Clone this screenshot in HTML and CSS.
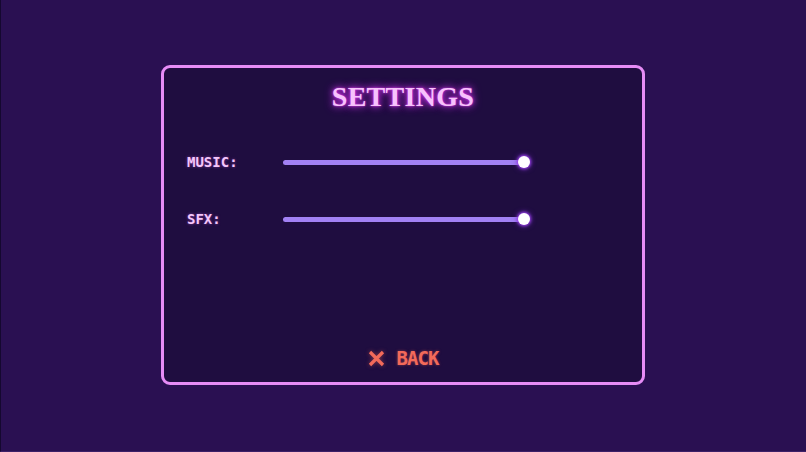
FILE: index.html
```html
<!DOCTYPE html>
<html>
<head>
<meta charset="utf-8">
<link rel="stylesheet" href="styles.css">
</head>
<body>
<div class="screen">
  <div class="panel">
    <h1 class="title">SETTINGS</h1>
    <div class="rows">
      <div class="row">
        <span class="label">MUSIC:</span>
        <div class="slider"><div class="track"></div><div class="thumb"></div></div>
      </div>
      <div class="row">
        <span class="label">SFX:</span>
        <div class="slider"><div class="track"></div><div class="thumb"></div></div>
      </div>
    </div>
    <div class="back">
      <svg class="x-icon" width="17" height="17" viewBox="0 0 17 17"><path d="M2 2 L15 15 M15 2 L2 15" stroke="#f26a5a" stroke-width="3.2" stroke-linecap="butt" fill="none"/></svg>
      <span class="back-text">BACK</span>
    </div>
  </div>
</div>
</body>
</html>
```
FILE: styles.css
```css
html, body {
  margin: 0;
  padding: 0;
  background: #2a1052;
}
.screen {
  box-sizing: border-box;
  width: 806px;
  height: 452px;
  background: #2a1052;
  border-left: 1px solid #150830;
  border-bottom: 1px solid #3c2068;
  display: flex;
  justify-content: center;
  align-items: flex-start;
  padding-top: 65px;
}
.panel {
  box-sizing: border-box;
  width: 484px;
  height: 320px;
  margin-left: -1px;
  background: #1f0d40;
  border: 3px solid #e68cf6;
  border-radius: 9px;
  display: flex;
  flex-direction: column;
  padding: 12px 23px 0 23px;
}
.title {
  margin: 0;
  text-align: center;
  font-family: "Liberation Serif", "DejaVu Serif", serif;
  font-weight: bold;
  font-size: 28px;
  line-height: 34px;
  color: #f7c2fc;
  text-shadow: 0 0 2px #e040f0, 0 0 6px #c030e0, 0 0 10px #a020c0;
  letter-spacing: 0.3px;
}
.rows {
  display: flex;
  flex-direction: column;
  gap: 35px;
  margin-top: 37px;
}
.row {
  display: flex;
  align-items: center;
  height: 22px;
}
.label {
  width: 96px;
  font-family: "DejaVu Sans Mono", "Liberation Mono", monospace;
  font-size: 14px;
  font-weight: bold;
  color: #f4c6fa;
  text-shadow: 0 0 3px rgba(220, 100, 240, 0.5);
}
.slider {
  position: relative;
  width: 248px;
  height: 14px;
  display: flex;
  align-items: center;
}
.track {
  width: 242px;
  height: 5px;
  border-radius: 2.5px;
  background: #a281f4;
}
.thumb {
  position: absolute;
  left: 235px;
  top: 1px;
  width: 12px;
  height: 12px;
  border-radius: 50%;
  background: #ffffff;
  box-shadow: 0 0 3px 1px #9a40e8, 0 0 6px #7a30d0;
}
.back {
  margin-top: auto;
  margin-bottom: 12px;
  display: flex;
  align-items: center;
  justify-content: center;
  gap: 12px;
  height: 24px;
}
.x-icon {
  display: block;
  filter: drop-shadow(0 0 2px rgba(240, 100, 80, 0.5));
}
.back-text {
  font-family: "DejaVu Sans Mono", "Liberation Mono", monospace;
  font-size: 19px;
  letter-spacing: -1px;
  font-weight: bold;
  color: #f26a5a;
  text-shadow: 0 0 3px rgba(240, 100, 80, 0.5);
}
```
